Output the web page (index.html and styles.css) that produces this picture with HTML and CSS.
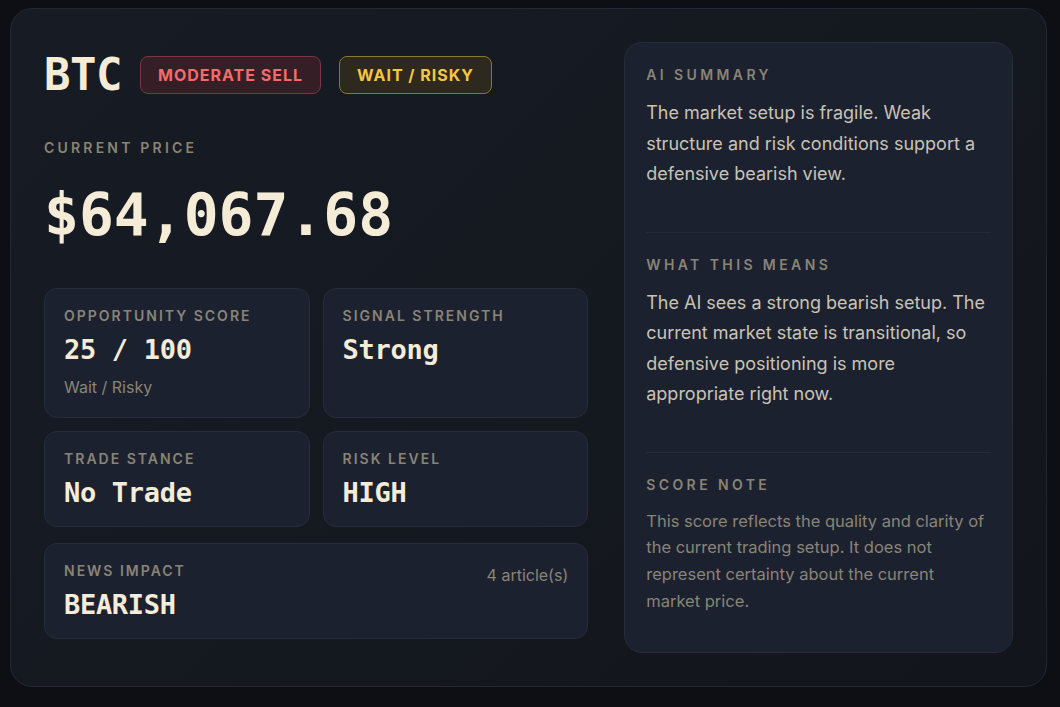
FILE: index.html
```html
<!DOCTYPE html>
<html lang="en">
<head>
<meta charset="utf-8">
<title>BTC Signal</title>
<link rel="stylesheet" href="styles.css">
</head>
<body>
<main class="panel">
  <section class="left">
    <header class="head">
      <h1 class="ticker">BTC</h1>
      <span class="badge badge-sell">MODERATE SELL</span>
      <span class="badge badge-wait">WAIT / RISKY</span>
    </header>
    <div class="label price-label">CURRENT PRICE</div>
    <div class="price">$64,067.68</div>
    <div class="grid">
      <div class="card">
        <div class="label">OPPORTUNITY SCORE</div>
        <div class="value">25 / 100</div>
        <div class="sub">Wait / Risky</div>
      </div>
      <div class="card">
        <div class="label">SIGNAL STRENGTH</div>
        <div class="value">Strong</div>
      </div>
      <div class="card">
        <div class="label">TRADE STANCE</div>
        <div class="value">No Trade</div>
      </div>
      <div class="card">
        <div class="label">RISK LEVEL</div>
        <div class="value">HIGH</div>
      </div>
    </div>
    <div class="card news">
      <div class="news-top">
        <div class="label">NEWS IMPACT</div>
        <div class="count">4 article(s)</div>
      </div>
      <div class="value">BEARISH</div>
    </div>
  </section>
  <aside class="side">
    <div class="sec">
      <div class="sec-label">AI SUMMARY</div>
      <p class="sec-text">The market setup is fragile. Weak structure and risk conditions support a defensive bearish view.</p>
    </div>
    <div class="sec">
      <div class="sec-label">WHAT THIS MEANS</div>
      <p class="sec-text">The AI sees a strong bearish setup. The current market state is transitional, so defensive positioning is more appropriate right now.</p>
    </div>
    <div class="sec last">
      <div class="sec-label">SCORE NOTE</div>
      <p class="sec-note">This score reflects the quality and clarity of the current trading setup. It does not represent certainty about the current market price.</p>
    </div>
  </aside>
</main>
</body>
</html>
```
FILE: styles.css
```css
* { box-sizing: border-box; }
html, body { margin: 0; padding: 0; }
body {
  background: #0d0f14;
  font-family: Inter, "Noto Sans", sans-serif;
  color: #c9c3b5;
  padding: 8px 13px 0 10px;
}
.panel {
  display: grid;
  grid-template-columns: 1.4fr 1fr;
  gap: 36px;
  padding: 33px;
  border: 1px solid #232834;
  border-radius: 22px;
  background: linear-gradient(135deg, #171b24 0%, #14181f 60%, #12151b 100%);
}
.left { padding-top: 14px; }
.head {
  display: flex;
  align-items: center;
  gap: 18px;
  height: 38px;
}
.ticker {
  margin: 0;
  font-family: "DejaVu Sans Mono", monospace;
  font-weight: bold;
  font-size: 44px;
  line-height: 38px;
  color: #f5ecd8;
  letter-spacing: -0.5px;
}
.badge {
  display: inline-flex;
  align-items: center;
  height: 38px;
  padding: 0 17px;
  border-radius: 8px;
  font-weight: 700;
  font-size: 16px;
  letter-spacing: 1px;
}
.badge-sell {
  background: #361e26;
  border: 1px solid #7b3643;
  color: #f36b6b;
}
.badge-wait {
  background: #2e291f;
  border: 1px solid #8a7633;
  color: #f7c548;
}
.label {
  font-size: 14px;
  line-height: 17px;
  font-weight: 600;
  letter-spacing: 2px;
  color: #8a8475;
}
.price-label {
  margin-top: 45px;
  letter-spacing: 3.2px;
}
.price {
  margin-top: 30px;
  font-family: "DejaVu Sans Mono", monospace;
  font-weight: bold;
  font-size: 58px;
  line-height: 58px;
  color: #f5ecd8;
  letter-spacing: 0;
}
.grid {
  margin-top: 44px;
  display: grid;
  grid-template-columns: 1fr 1fr;
  gap: 13px;
}
.card {
  background: #1c2130;
  border: 1px solid #262c3a;
  border-radius: 13px;
  padding: 18px 19px 17px;
}
.value {
  margin-top: 10px;
  font-family: "DejaVu Sans Mono", monospace;
  font-weight: bold;
  font-size: 27px;
  line-height: 32px;
  color: #f5ecd8;
  letter-spacing: -0.3px;
}
.sub {
  margin-top: 11px;
  font-size: 16px;
  line-height: 20px;
  color: #8a8475;
  padding-bottom: 3px;
}
.news { margin-top: 16px; }
.news-top {
  display: flex;
  justify-content: space-between;
  align-items: flex-end;
}
.count {
  font-size: 16px;
  line-height: 20px;
  color: #8a8475;
  margin-bottom: -6px;
}
.side {
  background: #1c2130;
  border: 1px solid #262c3a;
  border-radius: 18px;
  padding: 0 21px;
}
.sec {
  padding: 23px 0 42px;
  border-bottom: 1px solid #252b39;
}
.sec.last { border-bottom: none; padding-bottom: 38px; }
.sec-label {
  font-size: 14px;
  line-height: 17px;
  font-weight: 600;
  letter-spacing: 3.4px;
  color: #8a8475;
}
.sec-text {
  margin: 15px 0 0;
  font-size: 18px;
  line-height: 30.5px;
  color: #c9c3b5;
}
.sec-note {
  margin: 15px 0 0;
  font-size: 16.5px;
  line-height: 26.7px;
  color: #8a8475;
}
```
